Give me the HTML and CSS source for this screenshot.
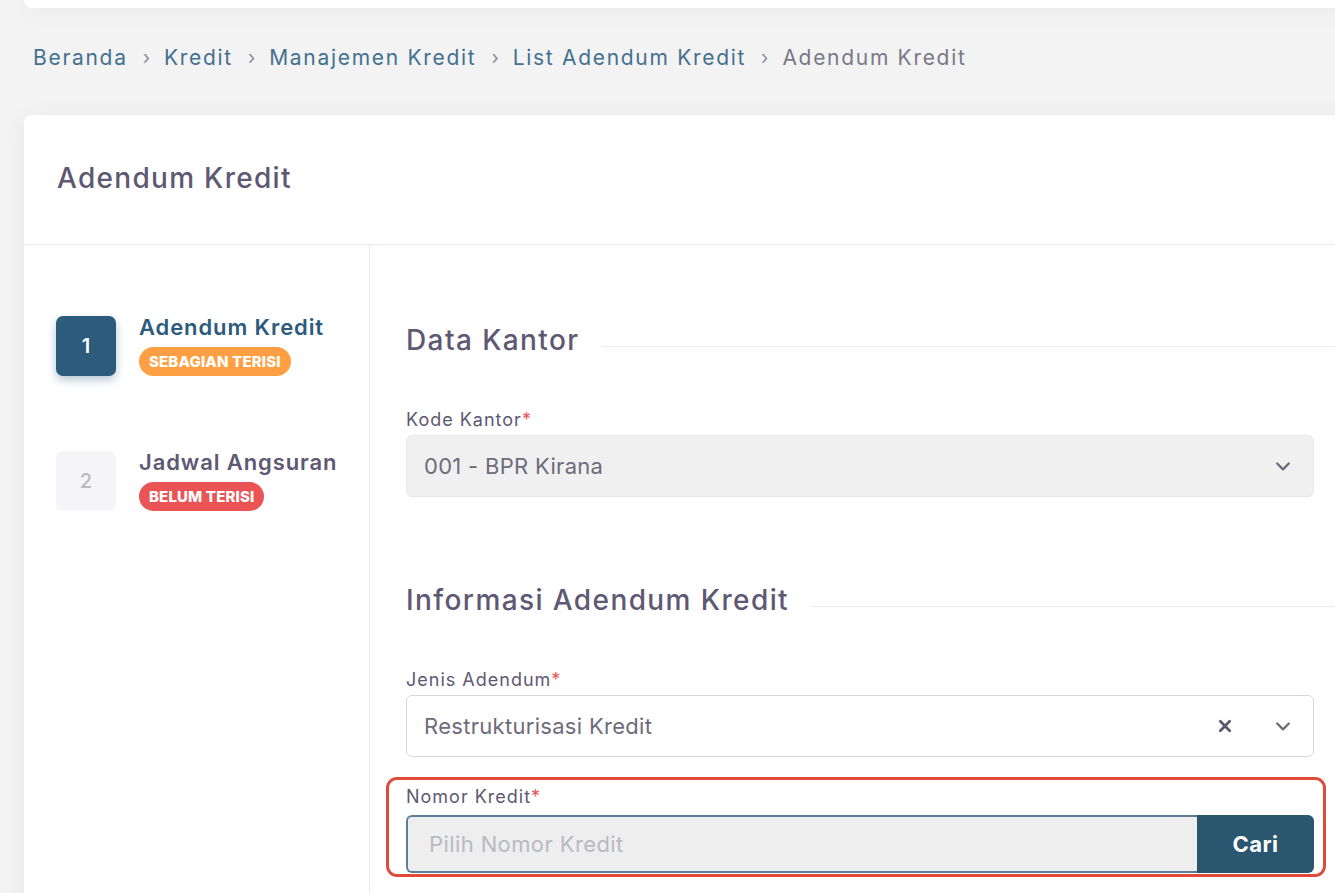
FILE: index.html
```html
<!DOCTYPE html>
<html>
<head>
<meta charset="utf-8">
<link rel="stylesheet" href="styles.css">
</head>
<body>
<div class="page">
  <div class="topbar"></div>
  <nav class="breadcrumb">
    <a class="crumb">Beranda</a><span class="sep">›</span>
    <a class="crumb">Kredit</a><span class="sep">›</span>
    <a class="crumb">Manajemen Kredit</a><span class="sep">›</span>
    <a class="crumb">List Adendum Kredit</a><span class="sep">›</span>
    <span class="crumb current">Adendum Kredit</span>
  </nav>
  <div class="card">
    <div class="card-header">Adendum Kredit</div>
    <div class="card-body">
      <aside class="steps">
        <div class="step active">
          <div class="step-num">1</div>
          <div class="step-info">
            <div class="step-title">Adendum Kredit</div>
            <span class="badge orange">SEBAGIAN TERISI</span>
          </div>
        </div>
        <div class="step">
          <div class="step-num">2</div>
          <div class="step-info">
            <div class="step-title">Jadwal Angsuran</div>
            <span class="badge red">BELUM TERISI</span>
          </div>
        </div>
      </aside>
      <section class="form">
        <div class="section-title first"><span>Data Kantor</span><div class="line"></div></div>
        <div class="field">
          <label class="label">Kode Kantor<span class="req">*</span></label>
          <div class="select disabled">
            <span class="value">001 - BPR Kirana</span>
            <svg class="chev" width="20" height="20" viewBox="0 0 24 24"><path d="M5 9l7 7 7-7" fill="none" stroke="#6e6b7b" stroke-width="2.8" stroke-linecap="round" stroke-linejoin="round"/></svg>
          </div>
        </div>
        <div class="section-title second"><span>Informasi Adendum Kredit</span><div class="line"></div></div>
        <div class="field">
          <label class="label">Jenis Adendum<span class="req">*</span></label>
          <div class="select">
            <span class="value">Restrukturisasi Kredit</span>
            <svg class="clear" width="16" height="16" viewBox="0 0 24 24"><path d="M5 5l14 14M19 5L5 19" fill="none" stroke="#5e5873" stroke-width="4.2" stroke-linecap="round"/></svg>
            <svg class="chev" width="20" height="20" viewBox="0 0 24 24"><path d="M5 9l7 7 7-7" fill="none" stroke="#6e6b7b" stroke-width="2.8" stroke-linecap="round" stroke-linejoin="round"/></svg>
          </div>
        </div>
        <div class="highlight">
          <label class="label">Nomor Kredit<span class="req">*</span></label>
          <div class="input-group">
            <div class="input">Pilih Nomor Kredit</div>
            <button class="btn">Cari</button>
          </div>
        </div>
      </section>
    </div>
  </div>
</div>
</body>
</html>
```
FILE: styles.css
```css
* { box-sizing: border-box; }
html, body { margin: 0; padding: 0; }
body {
  background: #f3f3f4;
  font-family: "Inter", "Open Sans", sans-serif;
  color: #5e5873;
  overflow: hidden;
  width: 1335px;
  height: 893px;
}
.page { padding-left: 24px; }
.topbar {
  height: 8px;
  margin-right: -20px;
  background: #fff;
  border-radius: 0 0 8px 8px;
  box-shadow: 0 4px 20px rgba(0,0,0,0.06);
}
.breadcrumb {
  display: flex;
  align-items: center;
  height: 98px;
  padding: 0 0 0 9px;
  font-size: 21px;
  letter-spacing: 1.7px;
}
.crumb { color: #44708f; text-decoration: none; }
.crumb.current { color: #7a7887; }
.sep { color: #8b8997; margin: 0 14px 0 15px; font-size: 19px; letter-spacing: 0; }
.card {
  margin-top: 9px;
  margin-right: -40px;
  background: #fff;
  border-radius: 8px 0 0 0;
  box-shadow: 0 4px 24px rgba(34,41,47,0.06);
  height: 900px;
}
.card-header {
  height: 130px;
  display: flex;
  align-items: center;
  padding-left: 33px;
  padding-bottom: 3px;
  font-size: 28px;
  letter-spacing: 1.3px;
  font-weight: 500;
  color: #5e5873;
  border-bottom: 1px solid #ebe9f1;
}
.card-body { display: flex; }
.steps {
  width: 346px;
  flex: none;
  border-right: 1px solid #ebe9f1;
  padding: 71px 0 0 32px;
  min-height: 700px;
}
.step { display: flex; gap: 23px; margin-bottom: 75px; }
.step-num {
  width: 60px; height: 60px;
  border-radius: 7px;
  display: flex; align-items: center; justify-content: center;
  background: #f5f5f7;
  color: #b9b9c3;
  font-size: 20px;
  font-weight: 500;
  flex: none;
}
.step.active .step-num {
  background: #2c5b7b;
  color: #fff;
  font-weight: 600;
  box-shadow: 0 4px 10px rgba(44,91,123,0.35);
}
.step-info { display: flex; flex-direction: column; align-items: flex-start; }
.step-title {
  font-size: 22px;
  font-weight: 600;
  letter-spacing: 0.9px;
  color: #5e5873;
  line-height: 22px;
}
.step.active .step-title { color: #2c5b7b; }
.badge {
  margin-top: 9px;
  display: inline-block;
  font-size: 15px;
  font-weight: 800;
  color: #fff;
  border-radius: 15px;
  padding: 0 10px;
  height: 29px;
  line-height: 29px;
  letter-spacing: 0.15px;
}
.badge.orange { background: #ff9f43; }
.badge.red { background: #ea5455; }
.form { padding-left: 36px; flex: 1; }
.section-title {
  display: flex;
  align-items: center;
  font-size: 28px;
  letter-spacing: 1.4px;
  font-weight: 500;
  color: #5e5873;
  height: 36px;
}
.section-title .line {
  flex: 1;
  height: 1px;
  background: #ebe9f1;
  margin-left: 22px;
  margin-top: 12px;
}
.section-title.first { margin-top: 77px; }
.section-title.second { margin-top: 85px; }
.field { width: 908px; }
.label {
  display: block;
  font-size: 18px;
  letter-spacing: 1px;
  color: #5e5873;
  line-height: 22px;
  margin-top: 51px;
  margin-bottom: 4px;
}
.req { color: #ea5455; }
.select {
  height: 62px;
  border: 1px solid #d8d6de;
  border-radius: 6px;
  display: flex;
  align-items: center;
  padding: 0 20px 0 17px;
  background: #fff;
}
.select.disabled { background: #f0f0f0; border-color: #e8e8ea; }
.select .value { flex: 1; font-size: 22px; letter-spacing: 0.3px; color: #6e6b7b; }
.select .clear { margin-right: 40px; }
.highlight {
  width: 940px;
  margin: 20px 0 0 -20px;
  border: 3px solid #e04b39;
  border-radius: 11px;
  padding: 6px 9px 1px 17px;
  height: 100px;
}
.highlight .label { margin-top: 0; margin-bottom: 7px; }
.input-group {
  display: flex;
  height: 58px;
  width: 908px;
}
.input {
  flex: 1;
  background: #eeeeee;
  border: 2px solid #5c7f99;
  border-right: none;
  border-radius: 6px 0 0 6px;
  display: flex;
  align-items: center;
  padding-left: 21px;
  font-size: 22px;
  letter-spacing: 0.4px;
  color: #b9b9c3;
}
.btn {
  width: 117px;
  border: none;
  background: #2a566f;
  color: #fff;
  font-family: inherit;
  font-size: 22px;
  font-weight: 700;
  letter-spacing: 0.5px;
  border-radius: 0 6px 6px 0;
  padding-bottom: 2px;
}
```
